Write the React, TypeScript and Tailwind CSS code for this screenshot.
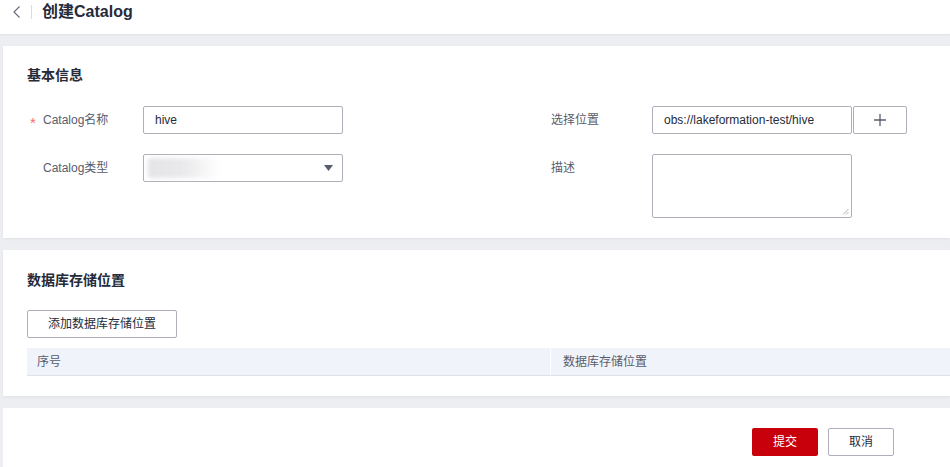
import React from "react";

const font = { fontFamily: '"Liberation Sans", "Noto Sans CJK SC", sans-serif' };

const Label = ({ text, required, width }: { text: string; required?: boolean; width: string }) => (
  <div className={`flex h-[28px] items-center text-[12px] text-[#575d6c] ${width}`}>
    <span className="relative top-[3px] w-[16px] pl-[3px] text-[15px] leading-[12px] text-[#f66f6a]">
      {required ? "*" : ""}
    </span>
    <span>{text}</span>
  </div>
);

export default function App() {
  return (
    <div style={font} className="h-[467px] w-[950px] overflow-hidden bg-[#eceef2]">
      {/* header */}
      <div className="flex h-[34px] items-start bg-white shadow-[0_1px_2px_rgba(0,0,0,0.05)]">
        <div className="flex h-[24px] items-center">
          <svg className="ml-[12px]" width="10" height="14" viewBox="0 0 10 14" fill="none">
            <path d="M7.5 1.5L2 7l5.5 5.5" stroke="#6b7080" strokeWidth="1.2" />
          </svg>
          <div className="ml-[9px] h-[14px] w-px bg-[#d8dae0]" />
          <h1 className="ml-[10px] text-[16px] font-bold text-[#252b3a]">创建Catalog</h1>
        </div>
      </div>

      <div className="flex flex-col gap-[12px] pl-[3px] pt-[12px]">
        {/* basic info */}
        <section className="bg-white px-[24px] pb-[20px] pt-[19px] shadow-[0_1px_3px_rgba(0,0,0,0.06)]">
          <h2 className="text-[14px] font-bold leading-[20px] text-[#252b3a]">基本信息</h2>
          <div className="mt-[21px] grid grid-cols-[524px_1fr] gap-y-[20px]">
            <div className="flex">
              <Label text="Catalog名称" required width="w-[116px]" />
              <div className="flex h-[28px] w-[200px] items-center rounded-[2px] border border-[#adb0b8] px-[11px] text-[12px] text-[#252b3a]">
                hive
              </div>
            </div>
            <div className="flex">
              <div className="flex h-[28px] w-[101px] items-center text-[12px] text-[#575d6c]">选择位置</div>
              <div className="flex h-[28px] w-[200px] items-center rounded-[2px] border border-[#adb0b8] px-[11px] text-[12px] text-[#252b3a]">
                obs://lakeformation-test/hive
              </div>
              <button className="ml-[1px] flex h-[28px] w-[54px] items-center justify-center rounded-[2px] border border-[#adb0b8] bg-white">
                <svg width="14" height="14" viewBox="0 0 14 14">
                  <path d="M7 1v12M1 7h12" stroke="#575d6c" strokeWidth="1.3" />
                </svg>
              </button>
            </div>
            <div className="flex">
              <Label text="Catalog类型" width="w-[116px]" />
              <div className="flex h-[28px] w-[200px] items-center justify-between rounded-[2px] border border-[#adb0b8] pl-[4px] pr-[9px]">
                <div className="h-[20px] w-[72px] bg-gradient-to-r from-[#e4e4e6] via-[#eaeaec] to-transparent blur-[2px]" />
                <svg width="9" height="6" viewBox="0 0 9 6">
                  <path d="M0 0h9L4.5 6z" fill="#575d6c" />
                </svg>
              </div>
            </div>
            <div className="flex">
              <div className="flex h-[28px] w-[101px] items-center text-[12px] text-[#575d6c]">描述</div>
              <div className="relative h-[64px] w-[200px] rounded-[2px] border border-[#adb0b8]">
                <svg className="absolute bottom-[2px] right-[2px]" width="7" height="7" viewBox="0 0 7 7">
                  <path d="M6.5 1L1 6.5M6.5 4L4 6.5" stroke="#9a9ca3" strokeWidth="0.8" />
                </svg>
              </div>
            </div>
          </div>
        </section>

        {/* db location */}
        <section className="bg-white pb-[20px] pl-[24px] pt-[20px] shadow-[0_1px_3px_rgba(0,0,0,0.06)]">
          <h2 className="text-[14px] font-bold leading-[20px] text-[#252b3a]">数据库存储位置</h2>
          <button className="mt-[20px] flex h-[28px] w-[150px] items-center justify-center rounded-[2px] border border-[#adb0b8] bg-white text-[12px] text-[#252b3a]">
            添加数据库存储位置
          </button>
          <div className="mt-[10px] grid h-[28px] grid-cols-[524px_1fr] border-b border-[#dfe1e6] bg-[#f0f3fa] text-[12px] text-[#575d6c]">
            <div className="flex items-center border-r border-white pl-[10px]">序号</div>
            <div className="flex items-center pl-[12px]">数据库存储位置</div>
          </div>
        </section>

        {/* footer */}
        <section className="flex h-[60px] items-start justify-end gap-[10px] bg-white pr-[56px] pt-[20px]">
          <button className="flex h-[28px] w-[66px] items-center justify-center rounded-[2px] bg-[#c7000b] text-[12px] text-white">
            提交
          </button>
          <button className="flex h-[28px] w-[66px] items-center justify-center rounded-[2px] border border-[#adb0b8] bg-white text-[12px] text-[#252b3a]">
            取消
          </button>
        </section>
      </div>
    </div>
  );
}
